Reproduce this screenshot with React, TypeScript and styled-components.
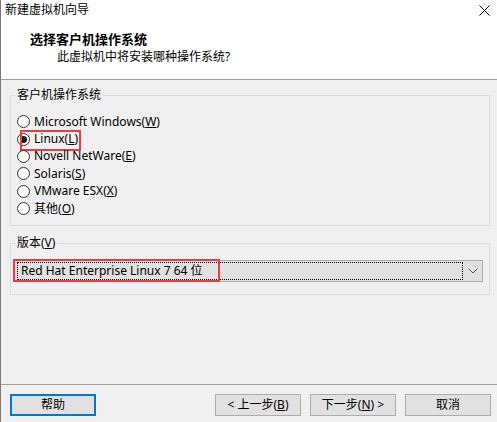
import React from "react";
import styled, { createGlobalStyle } from "styled-components";

const Global = createGlobalStyle`
  * { box-sizing: border-box; }
  html, body { margin: 0; padding: 0; background: #f0f0f0; }
  body {
    font-family: "Noto Sans", "Noto Sans CJK SC", sans-serif;
    font-size: 12px;
    color: #000;
  }
`;

const Window = styled.div`
  width: 497px;
  height: 422px;
  border-left: 1px solid #7a7a7a;
  display: flex;
  flex-direction: column;
  background: #f0f0f0;
  overflow: hidden;
`;

const Header = styled.div`
  height: 80px;
  background: #fff;
  border-bottom: 1px solid #a0a0a0;
  display: flex;
  flex-direction: column;
`;

const TitleBar = styled.div`
  height: 20px;
  display: flex;
  align-items: center;
  justify-content: space-between;
  padding: 0 7px 0 4px;
  line-height: 20px;
`;

const Heading = styled.div`
  margin-top: 11px;
  padding-left: 29px;
  font-size: 13px;
  font-weight: bold;
  line-height: 16px;
`;

const Subtitle = styled.div`
  margin-top: 2px;
  padding-left: 56px;
  line-height: 16px;
`;

const Body = styled.div`
  flex: 1;
  padding: 7px 7px 0 9px;
  display: flex;
  flex-direction: column;
`;

const Group = styled.fieldset<{ $gap?: number }>`
  margin: ${(p) => p.$gap ?? 0}px 0 0 0;
  padding: 0;
  min-width: 0;
  border: 1px solid #dcdcdc;
`;

const Legend = styled.legend`
  margin-left: 4px;
  padding: 0 2px;
  line-height: 16px;
`;

const RadioList = styled.div`
  display: flex;
  flex-direction: column;
  padding: 10px 0 8px 6px;
`;

const RadioRow = styled.div`
  position: relative;
  height: 17.4px;
  display: flex;
  align-items: center;
  gap: 4px;
  line-height: 16px;
  white-space: nowrap;
`;

const RadioCircle = styled.span<{ $checked?: boolean }>`
  width: 13px;
  height: 13px;
  border-radius: 50%;
  border: 1px solid #333;
  background: #fff;
  display: flex;
  align-items: center;
  justify-content: center;
  flex: none;
  &::after {
    content: "";
    width: 7px;
    height: 7px;
    border-radius: 50%;
    background: ${(p) => (p.$checked ? "#1a1a1a" : "transparent")};
  }
`;

const Mark = styled.div<{ $l: number; $t: number; $w: number; $h: number }>`
  position: absolute;
  left: ${(p) => p.$l}px;
  top: ${(p) => p.$t}px;
  width: ${(p) => p.$w}px;
  height: ${(p) => p.$h}px;
  border: 2px solid #ef3b3b;
  pointer-events: none;
`;

const Under = styled.u`
  text-underline-offset: 1px;
`;

const SelectWrap = styled.div`
  position: relative;
  margin: 9px 6px 12px 2px;
`;

const Combo = styled.div`
  height: 22px;
  border: 1px solid #adadad;
  background: #e1e1e1;
  display: flex;
  align-items: center;
  padding: 1px 0 1px 3px;
`;

const FocusRect = styled.div`
  width: 446px;
  height: 18px;
  border: 1px dotted #000;
  display: flex;
  align-items: center;
  padding-left: 3px;
  line-height: 16px;
  white-space: nowrap;
`;

const Arrow = styled.div`
  flex: 1;
  display: flex;
  justify-content: center;
  align-items: center;
`;

const Footer = styled.div`
  height: 38px;
  border-top: 1px solid #a0a0a0;
  display: flex;
  align-items: flex-start;
  padding: 9px 6px 0 9px;
`;

const Button = styled.div<{ $primary?: boolean }>`
  width: 86px;
  height: 22px;
  background: #e1e1e1;
  border: ${(p) => (p.$primary ? "2px solid #0078d7" : "1px solid #adadad")};
  display: flex;
  align-items: center;
  justify-content: center;
  line-height: 16px;
  white-space: nowrap;
`;

const Spacer = styled.div`
  flex: 1;
`;

const ButtonGroup = styled.div`
  display: flex;
  gap: 9px;
`;

const options: { label: string; key: string; checked?: boolean }[] = [
  { label: "Microsoft Windows", key: "W" },
  { label: "Linux", key: "L", checked: true },
  { label: "Novell NetWare", key: "E" },
  { label: "Solaris", key: "S" },
  { label: "VMware ESX", key: "X" },
  { label: "其他", key: "O" },
];

export default function App() {
  return (
    <>
      <Global />
      <Window>
        <Header>
          <TitleBar>
            <span>新建虚拟机向导</span>
            <svg width="11" height="11" viewBox="0 0 11 11">
              <path d="M0.5 0.5 L10.5 10.5 M10.5 0.5 L0.5 10.5" stroke="#000" strokeWidth="1" />
            </svg>
          </TitleBar>
          <Heading>选择客户机操作系统</Heading>
          <Subtitle>此虚拟机中将安装哪种操作系统?</Subtitle>
        </Header>
        <Body>
          <Group>
            <Legend>客户机操作系统</Legend>
            <RadioList>
              {options.map((o) => (
                <RadioRow key={o.key}>
                  <RadioCircle $checked={o.checked} />
                  <span>
                    {o.label}(<Under>{o.key}</Under>)
                  </span>
                  {o.checked && <Mark $l={3} $t={-0.5} $w={61} $h={21} />}
                </RadioRow>
              ))}
            </RadioList>
          </Group>
          <Group $gap={9}>
            <Legend>
              版本(<Under>V</Under>)
            </Legend>
            <SelectWrap>
              <Combo>
                <FocusRect>Red Hat Enterprise Linux 7 64 位</FocusRect>
                <Arrow>
                  <svg width="10" height="6" viewBox="0 0 10 6">
                    <path d="M0.5 0.5 L5 5 L9.5 0.5" fill="none" stroke="#555" strokeWidth="1" />
                  </svg>
                </Arrow>
              </Combo>
              <Mark $l={-0.5} $t={-1} $w={207} $h={23} />
            </SelectWrap>
          </Group>
        </Body>
        <Footer>
          <Button $primary>帮助</Button>
          <Spacer />
          <ButtonGroup>
            <Button>
              &lt; 上一步(<Under>B</Under>)
            </Button>
            <Button>
              下一步(<Under>N</Under>) &gt;
            </Button>
            <Button>取消</Button>
          </ButtonGroup>
        </Footer>
      </Window>
    </>
  );
}
